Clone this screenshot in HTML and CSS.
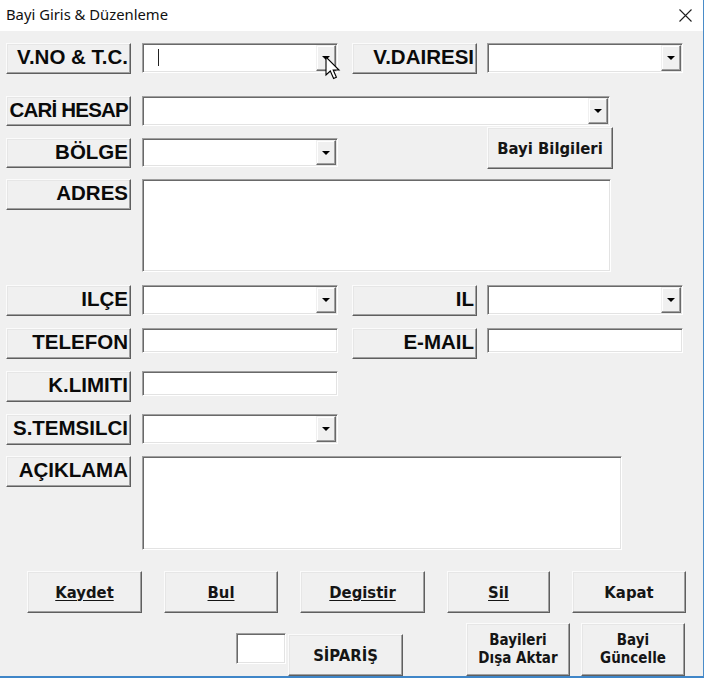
FILE: index.html
```html
<!DOCTYPE html>
<html lang="tr">
<head>
<meta charset="utf-8">
<title>Bayi Giris &amp; Düzenleme</title>
<link rel="stylesheet" href="styles.css">
</head>
<body>
<div class="window">
  <div class="titlebar">
    <span class="title">Bayi Giris &amp; Düzenleme</span>
    <svg class="close" width="13" height="13" viewBox="0 0 13 13"><path d="M0.5 0.5L12.5 12.5M12.5 0.5L0.5 12.5" stroke="#1e1e1e" stroke-width="1.1" fill="none"/></svg>
  </div>
  <div class="client">
    <div class="row row-1">
      <div class="lbl">V.NO &amp; T.C.</div>
      <div class="field combo"><span class="caret"></span><span class="drop"><svg width="8" height="4" viewBox="0 0 8 4"><path d="M0 0H8L4 4Z" fill="#000"/></svg></span></div>
      <div class="lbl lbl-right">V.DAIRESI</div>
      <div class="field combo"><span class="drop"><svg width="8" height="4" viewBox="0 0 8 4"><path d="M0 0H8L4 4Z" fill="#000"/></svg></span></div>
    </div>
    <div class="row row-2">
      <div class="lbl lbl-tight">CARİ HESAP</div>
      <div class="field combo combo-wide"><span class="drop"><svg width="8" height="4" viewBox="0 0 8 4"><path d="M0 0H8L4 4Z" fill="#000"/></svg></span></div>
    </div>
    <div class="row row-3">
      <div class="lbl lbl-low">BÖLGE</div>
      <div class="field combo combo-low"><span class="drop"><svg width="8" height="4" viewBox="0 0 8 4"><path d="M0 0H8L4 4Z" fill="#000"/></svg></span></div>
      <div class="btn btn-info">Bayi Bilgileri</div>
    </div>
    <div class="row row-4">
      <div class="lbl">ADRES</div>
      <div class="field area area-adres"></div>
    </div>
    <div class="row row-5">
      <div class="lbl">ILÇE</div>
      <div class="field combo"><span class="drop"><svg width="8" height="4" viewBox="0 0 8 4"><path d="M0 0H8L4 4Z" fill="#000"/></svg></span></div>
      <div class="lbl lbl-right">IL</div>
      <div class="field combo"><span class="drop"><svg width="8" height="4" viewBox="0 0 8 4"><path d="M0 0H8L4 4Z" fill="#000"/></svg></span></div>
    </div>
    <div class="row row-6">
      <div class="lbl">TELEFON</div>
      <div class="field text"></div>
      <div class="lbl lbl-right">E-MAIL</div>
      <div class="field text"></div>
    </div>
    <div class="row row-7">
      <div class="lbl">K.LIMITI</div>
      <div class="field text"></div>
    </div>
    <div class="row row-8">
      <div class="lbl">S.TEMSILCI</div>
      <div class="field combo"><span class="drop"><svg width="8" height="4" viewBox="0 0 8 4"><path d="M0 0H8L4 4Z" fill="#000"/></svg></span></div>
    </div>
    <div class="row row-9">
      <div class="lbl">AÇIKLAMA</div>
      <div class="field area area-aciklama"></div>
    </div>
    <div class="actions">
      <div class="btn btn-kaydet"><u>Kaydet</u></div>
      <div class="btn btn-bul"><u>Bul</u></div>
      <div class="btn btn-degistir"><u>Degistir</u></div>
      <div class="btn btn-sil"><u>Sil</u></div>
      <div class="btn btn-kapat">Kapat</div>
    </div>
    <div class="footer">
      <div class="field small-box"></div>
      <div class="btn btn-siparis">SİPARİŞ</div>
      <div class="btn btn-two btn-aktar">Bayileri<br>Dışa Aktar</div>
      <div class="btn btn-two btn-guncelle">Bayi<br>Güncelle</div>
    </div>
  </div>
</div>
<svg class="pointer" width="16" height="24" viewBox="0 0 16 24"><path d="M1 1V19L5.3 15L8.6 22.5L11.4 21.2L8.2 14H14Z" fill="#fff" stroke="#000" stroke-width="1.1" stroke-linejoin="miter"/></svg>
</body>
</html>
```
FILE: styles.css
```css
* { box-sizing: border-box; }
html, body { margin: 0; padding: 0; background: #fff; }
body { position: relative; width: 706px; height: 680px; overflow: hidden; }

.window {
  width: 704px;
  height: 678px;
  background: #f0f0f0;
  border-right: 1px solid #4a8cc8;
  border-bottom: 2px solid #3f86c8;
  display: flex;
  flex-direction: column;
}

.titlebar {
  height: 31px;
  flex: none;
  background: #fff;
  display: flex;
  align-items: center;
  justify-content: space-between;
  padding: 0 11px 3px 6px;
}
.title {
  font-family: "Noto Sans", "Open Sans", sans-serif;
  font-size: 14.8px;
  color: #111;
}
.close { display: block; margin-top: 2px; }

.client {
  flex: 1;
  display: flex;
  flex-direction: column;
  padding-left: 6px;
}

.row { display: flex; align-items: flex-start; }
.row-1 { margin-top: 12px; }
.row-2 { margin-top: 22px; }
.row-3 { margin-top: 1px; }
.row-4 { margin-top: 10px; }
.row-5 { margin-top: 13px; }
.row-6 { margin-top: 12px; }
.row-7 { margin-top: 12px; }
.row-8 { margin-top: 12px; }
.row-9 { margin-top: 11px; }

/* raised label buttons */
.lbl {
  width: 125px;
  height: 31px;
  flex: none;
  background: #f0f0f0;
  border: 1px solid;
  border-color: #fbfbfb #5f5f5f #5f5f5f #fbfbfb;
  box-shadow: inset -1px -1px 0 #a0a0a0, inset 1px 1px 0 #e6e6e6;
  font-family: "Liberation Sans", Arial, sans-serif;
  font-weight: bold;
  font-size: 20.5px;
  color: #0a0a0a;
  text-align: right;
  padding: 0 2px 0 0;
  line-height: 26px;
  white-space: nowrap;
  overflow: hidden;
  margin-right: 11px;
}
.lbl-right { margin-left: 14px; margin-right: 10px; }
.lbl-tight { letter-spacing: -0.8px; height: 30px; }
.lbl-low { margin-top: 11px; height: 30px; }

/* sunken fields */
.field {
  flex: none;
  background: #fff;
  border: 1px solid;
  border-color: #a0a0a0 #fff #fff #a0a0a0;
  box-shadow: inset 1px 1px 0 #696969, inset -1px -1px 0 #e3e3e3;
}
.combo {
  width: 196px;
  height: 30px;
  padding: 1px;
  display: flex;
  align-items: stretch;
  justify-content: flex-end;
  position: relative;
}
.combo-wide { width: 468px; }
.combo-low { margin-top: 11px; height: 29px; }
.drop {
  width: 20px;
  background: #f0f0f0;
  border: 1px solid;
  border-color: #f0f0f0 #696969 #696969 #f0f0f0;
  box-shadow: inset -1px -1px 0 #a0a0a0, inset 1px 1px 0 #fff;
  display: flex;
  align-items: center;
  justify-content: center;
}
.drop svg { display: block; }
.caret {
  position: absolute;
  left: 15px;
  top: 5px;
  width: 1px;
  height: 17px;
  background: #222;
}
.text { width: 196px; height: 25px; }
.area-adres { width: 469px; height: 93px; }
.area-aciklama { width: 480px; height: 94px; }

/* push buttons */
.btn {
  flex: none;
  background: #f0f0f0;
  border: 1px solid;
  border-color: #fbfbfb #5f5f5f #5f5f5f #fbfbfb;
  box-shadow: inset -1px -1px 0 #a0a0a0, inset 1px 1px 0 #e6e6e6;
  font-family: "DejaVu Sans Condensed", "DejaVu Sans", sans-serif;
  font-stretch: condensed;
  font-weight: bold;
  font-size: 16.5px;
  color: #151515;
  display: flex;
  align-items: center;
  justify-content: center;
  text-align: center;
  white-space: nowrap;
}
.btn u { text-underline-offset: 2px; text-decoration-thickness: 1px; }
.btn-info { width: 126px; height: 42px; margin-left: 149px; }

.actions {
  display: flex;
  gap: 22px;
  margin-top: 21px;
  padding-left: 21px;
}
.actions .btn { height: 42px; }
.btn-kaydet { width: 115px; }
.btn-bul { width: 114px; }
.btn-degistir { width: 125px; }
.btn-sil { width: 103px; }
.btn-kapat { width: 114px; }

.footer {
  display: flex;
  align-items: flex-end;
  margin-top: 10px;
  padding-left: 230px;
}
.small-box { width: 50px; height: 31px; margin-bottom: 12px; }
.btn-siparis { width: 115px; height: 42px; margin-left: 2px; }
.btn-two {
  width: 104px;
  height: 53px;
  font-size: 15px;
  line-height: 18px;
  padding-bottom: 1px;
}
.btn-aktar { margin-left: 63px; }
.btn-guncelle { margin-left: 11px; }

.pointer {
  position: absolute;
  left: 325px;
  top: 56px;
}
```
